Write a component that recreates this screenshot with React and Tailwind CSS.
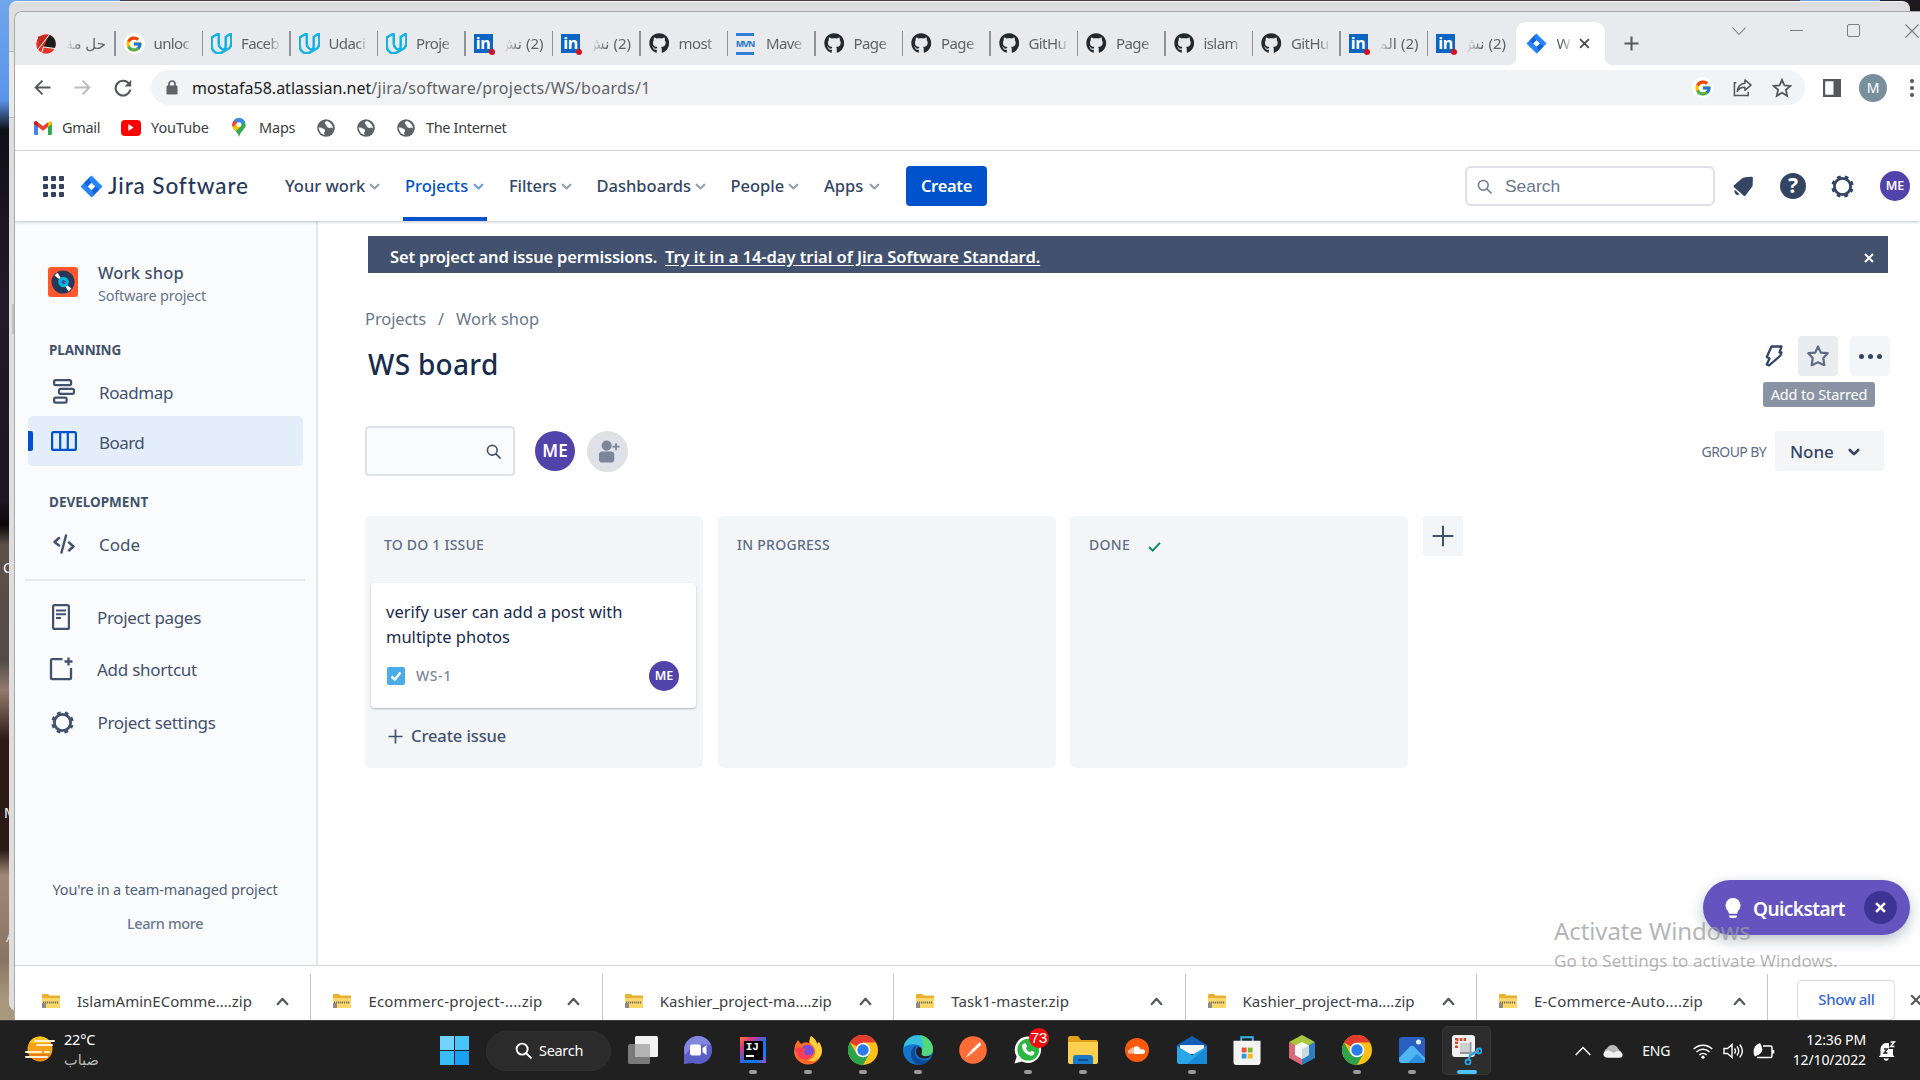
import React from "react";
import { FaGithub } from "react-icons/fa";
import { FcGoogle } from "react-icons/fc";
import { SiUdacity } from "react-icons/si";

/* ---------- shared icons ---------- */

const JiraMark = ({ className }) => (
  <svg viewBox="0 0 24 24" className={className}>
    <path d="M12 0.5 23.5 12 12 23.5 0.5 12Z" fill="#2684ff" />
    <path d="M12 0.5 Q8 5 12 8.2 L8.2 12 L4 8.5Z" fill="#1262d8" />
    <path d="M12 23.5 Q16 19 12 15.8 L15.8 12 L20 15.5Z" fill="#1262d8" />
    <path d="M12 8.2 15.8 12 12 15.8 8.2 12Z" fill="#fff" />
  </svg>
);

const Search = ({ className, sw = 2 }) => (
  <svg viewBox="0 0 16 16" className={className} fill="none" stroke="currentColor" strokeWidth={sw} strokeLinecap="round">
    <circle cx="6.7" cy="6.7" r="5.2" />
    <path d="M10.6 10.6 15 15" />
  </svg>
);

const Chevron = ({ className, up, sw = 2.4 }) => (
  <svg viewBox="0 0 12 12" className={className} fill="none" stroke="currentColor" strokeWidth={sw} strokeLinecap="round" strokeLinejoin="round">
    <path d={up ? "M1.5 8.5 6 3.5 10.5 8.5" : "M1.8 4 6 8.2 10.2 4"} />
  </svg>
);

const Cross = ({ className, sw = 2 }) => (
  <svg viewBox="0 0 12 12" className={className} stroke="currentColor" strokeWidth={sw}>
    <path d="M1.2 1.2 10.8 10.8M10.8 1.2 1.2 10.8" />
  </svg>
);

const Plus = ({ className, sw = 2 }) => (
  <svg viewBox="0 0 16 16" className={className} stroke="currentColor" strokeWidth={sw}>
    <path d="M8 0.5V15.5M0.5 8H15.5" />
  </svg>
);

const Gear = ({ className }) => (
  <svg viewBox="0 0 24 24" className={className} fill="none" stroke="currentColor">
    <circle cx="12" cy="12" r="7.8" strokeWidth="2.7" />
    <circle cx="12" cy="12" r="9.4" strokeWidth="2.8" strokeDasharray="3.6 3.783" strokeDashoffset="1.8" transform="rotate(22.5 12 12)" />
  </svg>
);

const LinkedIn = () => (
  <div className="relative flex size-[19px] items-center justify-center bg-[#0a66c2] font-['Open_Sans'] text-[16px] leading-none font-bold tracking-[-0.5px] text-white">
    <span className="mt-[-1px]">in</span>
    <span className="absolute right-[-2px] bottom-[-2px] size-[6px] rounded-full bg-[#d11124]" />
  </div>
);

const Maven = () => (
  <div className="flex h-[22px] w-[18px] flex-col items-center justify-between">
    <span className="h-[3px] w-full bg-[#2f7fd6]" />
    <span className="font-['Liberation_Sans'] text-[9.5px] leading-none font-bold tracking-[-1px] text-[#1a73d0]">MVN</span>
    <span className="h-[3px] w-full bg-[#2f7fd6]" />
  </div>
);

const GoogleDot = () => (
  <div className="flex size-[21px] items-center justify-center rounded-full bg-white">
    <FcGoogle className="size-[18px]" />
  </div>
);

const RedBlack = () => (
  <svg viewBox="0 0 20 20" className="size-[20px]">
    <circle cx="10" cy="10" r="9.8" fill="#e5352b" />
    <path d="M13 .6A9.800 9.800 0 0 1 18.500 14.500L7.500 13.500Z" fill="#1c1c1c" />
    <path d="M2 2.500 13 .6 3 16Z" fill="#c8281f" />
    <path d="M1.500 16 13.500 .5M5.500 19.500 7.500 13 19 14.500" fill="none" stroke="#fff" strokeWidth="1" />
  </svg>
);

const Avatar = ({ className }) => (
  <div className={"flex shrink-0 items-center justify-center rounded-full bg-[#5243aa] font-semibold text-white " + className}>ME</div>
);

/* ---------- browser chrome ---------- */

const gh = <FaGithub className="size-[20.5px] text-[#24292f]" />;
const ud = <SiUdacity className="size-[21px] fill-[#12b2e2] stroke-[#12b2e2] stroke-[1.2]" />;
const li = <LinkedIn />;

const tabs = [
  [<RedBlack />, "حل مة", true],
  [<GoogleDot />, "unloc"],
  [ud, "Faceb"],
  [ud, "Udaci"],
  [ud, "Proje"],
  [li, "(2) نش", true],
  [li, "(2) نش", true],
  [gh, "most"],
  [<Maven />, "Mave"],
  [gh, "Page"],
  [gh, "Page"],
  [gh, "GitHu"],
  [gh, "Page"],
  [gh, "islam"],
  [gh, "GitHu"],
  [li, "(2) الم", true],
  [li, "(2) نش", true],
];

function Tab({ icon, label, rtl, last }) {
  return (
    <div className="flex h-[43px] w-[87.5px] shrink-0 items-center">
      <div className="flex w-[38px] shrink-0 pl-[8px]">{icon}</div>
      <div
        dir={rtl ? "rtl" : "ltr"}
        className={
          "w-[40px] text-[15px] tracking-[-0.6px] whitespace-nowrap text-[#5f6368] " +
          (rtl
            ? "[mask-image:linear-gradient(to_left,black_60%,transparent)]"
            : "[mask-image:linear-gradient(to_right,black_68%,transparent)]")
        }
      >
        {label}
      </div>
      {!last && <div className="ml-auto h-[25px] w-[1.5px] bg-[#8f9398]" />}
    </div>
  );
}

function TabStrip() {
  return (
    <div className="flex h-[53px] shrink-0 items-end bg-[#e8eaed] pl-[13px]">
      {tabs.map(([icon, label, rtl], i) => (
        <Tab key={i} icon={icon} label={label} rtl={rtl} last={i === tabs.length - 1} />
      ))}
      <div className="relative flex h-[43px] w-[89px] shrink-0 items-center rounded-t-[10px] bg-white pl-[10px]">
        <span className="absolute bottom-0 left-[-8px] size-[8px] bg-[radial-gradient(circle_at_0_0,#e8eaed_8px,white_8.5px)]" />
        <span className="absolute right-[-8px] bottom-0 size-[8px] bg-[radial-gradient(circle_at_100%_0,#e8eaed_8px,white_8.5px)]" />
        <JiraMark className="size-[21px]" />
        <span className="ml-[10px] w-[15px] text-[15px] text-[#5f6368] [mask-image:linear-gradient(to_right,black_40%,transparent)]">W</span>
        <Cross className="ml-[7px] size-[11px] text-[#4a4d51]" />
      </div>
      <div className="flex h-[43px] items-center pl-[19px] text-[#54575b]">
        <Plus className="size-[15px]" sw={2.2} />
      </div>
      <div className="ml-auto flex h-[53px] w-[195px] shrink-0 items-start pt-[11px] text-[#7a7d81]">
        <svg viewBox="0 0 16 16" className="ml-[6px] size-[16px]" fill="none" stroke="currentColor" strokeWidth="1.1"><path d="M1.5 4.5 8 11.5 14.5 4.5" /></svg>
        <div className="mt-[7px] ml-[43px] h-px w-[13px] bg-current" />
        <div className="mt-[1px] ml-[44px] h-[13px] w-[13px] rounded-[2px] border border-current" />
        <svg viewBox="0 0 14 14" className="mt-[1px] ml-[45px] size-[14px] shrink-0" stroke="currentColor" strokeWidth="1.1"><path d="M.5.5 13.5 13.5M13.5.5.5 13.5" /></svg>
      </div>
    </div>
  );
}

function Toolbar() {
  return (
    <div className="flex h-[45px] shrink-0 items-center bg-white text-[#54575b]">
      <svg viewBox="0 0 18 18" className="ml-[19px] size-[17px]" fill="none" stroke="currentColor" strokeWidth="2"><path d="M17.5 9H2M9 1.7 1.7 9 9 16.3" /></svg>
      <svg viewBox="0 0 18 18" className="ml-[23px] size-[17px] text-[#b9bbbe]" fill="none" stroke="currentColor" strokeWidth="2"><path d="M.5 9H16M9 1.7 16.3 9 9 16.3" /></svg>
      <svg viewBox="0 0 18 18" className="ml-[23px] size-[18px]" fill="none" stroke="currentColor" strokeWidth="2.1"><path d="M15.2 5A7.4 7.4 0 1 0 16.3 10.6" /><path d="M17.2.8V7.4H10.6Z" fill="currentColor" stroke="none" /></svg>
      <div className="ml-[19px] flex h-[35px] w-[1654px] shrink-0 items-center rounded-full bg-[#f1f3f4]">
        <svg viewBox="0 0 12 15" className="ml-[15px] h-[15px] w-[12px]"><path d="M3 6.5V4a3 3 0 0 1 6 0V6.5" fill="none" stroke="#5f6368" strokeWidth="1.7" /><rect x=".5" y="5.6" width="11" height="9" rx="1.4" fill="#5f6368" /></svg>
        <div className="ml-[14px] text-[16px] whitespace-nowrap text-[#5f6368]">
          <span className="text-[#202124]">mostafa58.atlassian.net</span>
          <span className="tracking-[0.27px]">/jira/software/projects/WS/boards/1</span>
        </div>
        <div className="mr-[13px] ml-auto flex items-center">
          <GoogleDot />
          <svg viewBox="0 0 20 20" className="ml-[20px] size-[19px]" fill="none" stroke="currentColor" strokeWidth="1.6"><path d="M3.5 5H1.5V18.5H16V14.5" /><path d="M12.5 2 19 7.5 12.5 13V9.8Q7 9.500 4.500 14Q5 6.500 12.500 5.400Z" strokeLinejoin="round" /></svg>
          <svg viewBox="0 0 20 20" className="ml-[20px] size-[20px]" fill="none" stroke="currentColor" strokeWidth="1.8"><path d="M10 1.8 12.4 7.3 18.4 7.9 13.9 11.9 15.2 17.8 10 14.7 4.8 17.8 6.1 11.9 1.6 7.9 7.6 7.3Z" /></svg>
        </div>
      </div>
      <svg viewBox="0 0 18 18" className="ml-[18px] size-[18px]"><path d="M0 0H18V18H0ZM2.2 2.2V15.8H10.5V2.2Z" fillRule="evenodd" fill="currentColor" /></svg>
      <div className="ml-[18px] flex size-[28px] items-center justify-center rounded-full bg-[#78909c] text-[14px] text-white">M</div>
      <div className="ml-[23px] flex flex-col gap-[3px]">
        {[0, 1, 2].map((i) => <span key={i} className="size-[4px] rounded-full bg-current" />)}
      </div>
    </div>
  );
}

const Globe = ({ className }) => (
  <svg viewBox="0 0 18 18" className={"size-[18px] " + className}>
    <circle cx="9" cy="9" r="8.8" fill="#5f6368" />
    <path d="M1.6 8.6Q4.5 8 5.5 9.5Q8 9.5 8 12Q6.5 13.5 7.5 16Q2.5 15 1.6 8.6ZM10 2Q7.200 3 8 5Q10 5.500 9.500 7.500Q11.500 9.800 14.500 8.500L16 9.500Q15.500 4 10 2Z" fill="#fff" />
  </svg>
);

function Bookmarks() {
  return (
    <div className="flex h-[41px] shrink-0 items-center border-b border-[#dadce0] bg-white pb-[5px] text-[14.5px] text-[#3c4043]">
      <svg viewBox="0 0 18 14" className="ml-[19px] h-[14px] w-[18px]">
        <path d="M0 2V12.5Q0 14 1.5 14H4V5Z" fill="#4285f4" />
        <path d="M14 5V14H16.500Q18 14 18 12.500V2Z" fill="#34a853" />
        <path d="M14 1.500V6L18 3V2Q18 .2 16.300.2Z" fill="#fbbc04" />
        <path d="M0 2V3L9 9.800 14 6V1.200L9 5 2.500.3Q0-.3 0 2Z" fill="#ea4335" />
        <path d="M0 2V3L4 6V1.400L2.500.3Q0-.3 0 2Z" fill="#c5221f" />
      </svg>
      <span className="ml-[10px] w-[39px] tracking-[-0.3px]">Gmail</span>
      <div className="ml-[20px] flex h-[16px] w-[20px] items-center justify-center rounded-[4px] bg-[#f00]">
        <svg viewBox="0 0 6 8" className="h-[7px] w-[6px]"><path d="M0 0 6 4 0 8Z" fill="#fff" /></svg>
      </div>
      <span className="ml-[10px] w-[59px] tracking-[-0.1px]">YouTube</span>
      <svg viewBox="0 0 14 20" className="ml-[22px] h-[19px] w-[14px]">
        <path d="M7 0A7 7 0 0 0 0 7C0 12 5.500 13.500 7 20C8.500 13.500 14 12 14 7A7 7 0 0 0 7 0Z" fill="#34a853" />
        <path d="M7 0A7 7 0 0 1 13.200 3.800L7 7 1.600 2.500A7 7 0 0 1 7 0Z" fill="#4285f4" />
        <path d="M1.600 2.500A7 7 0 0 0 .6 9.800L5 5.300Z" fill="#ea4335" />
        <path d="M.6 9.800 5 5 9.500 8.500 3.500 14Q1.500 12 .6 9.800Z" fill="#fbbc04" />
        <circle cx="7" cy="7" r="2.600" fill="#fff" />
      </svg>
      <span className="ml-[13px] w-[37px] tracking-[-0.2px]">Maps</span>
      <Globe className="ml-[21px]" />
      <Globe className="ml-[22px]" />
      <Globe className="ml-[22px]" />
      <span className="ml-[11px] tracking-[-0.35px]">The Internet</span>
    </div>
  );
}

/* ---------- Jira header ---------- */

const nav = [
  ["Your work", "ml-[35px] w-[84px]"],
  ["Projects", "ml-[25px] w-[68px]", true],
  ["Filters", "ml-[25px] w-[51.5px] tracking-[-0.1px]"],
  ["Dashboards", "ml-[25px] w-[98px]"],
  ["People", "ml-[25px] w-[57.5px]"],
  ["Apps", "ml-[25px] w-[45px]"],
];

function JiraHeader() {
  return (
    <div className="z-10 flex h-[70px] shrink-0 items-center bg-white text-[16.5px] font-medium text-[#344563] shadow-[0_1px_3px_rgba(9,30,66,0.25)]">
      <div className="ml-[28px] grid grid-cols-3 gap-[3px]">
        {Array.from({ length: 9 }, (_, i) => <span key={i} className="size-[5px] rounded-[1px] bg-[#344563]" />)}
      </div>
      <JiraMark className="ml-[16px] size-[23px]" />
      <span className="ml-[5px] w-[142px] font-['Lato'] text-[22.5px] tracking-[0.9px] whitespace-nowrap text-[#253858]">Jira Software</span>
      {nav.map(([label, cls, active]) => (
        <div key={label} className={"relative flex h-full shrink-0 items-center " + (active ? "text-[#0052cc]" : "")}>
          <span className={"pt-[1px] whitespace-nowrap " + cls}>{label}</span>
          <Chevron className={"size-[11px] " + (active ? "text-[#6f9fe0]" : "text-[#97a0af]")} />
          {active && <span className="absolute right-[-3px] bottom-0 left-[23px] h-[4px] bg-[#0052cc]" />}
        </div>
      ))}
      <div className="ml-[26px] flex h-[40px] w-[81px] items-center justify-center rounded-[4px] bg-[#0052cc] pt-[1px] font-semibold tracking-[-0.3px] text-white">Create</div>
      <div className="ml-[478px] flex h-[40px] w-[250px] shrink-0 items-center rounded-[6px] border-2 border-[#dfe1e6] pl-[10px] font-['Liberation_Sans'] font-normal text-[#6b778c]">
        <Search className="size-[15px]" sw={1.6} />
        <span className="ml-[13px] text-[17.4px]">Search</span>
      </div>
      <svg viewBox="0 0 24 24" className="ml-[17px] size-[22px] shrink-0 text-[#344563]" fill="currentColor">
        <path d="M21.500 2Q22.800 2 22.800 3.300L22.500 12 14.500 22.500Q13.500 23.300 12.500 22.300L2 13Q1 12 2.200 11.200L10.500 4Q14 1.800 21.500 2Z" />
        <path d="M3 16.200 8.300 21Q6 22.800 4 21Q1.800 18.800 3 16.200Z" />
      </svg>
      <div className="ml-[26px] flex size-[26px] shrink-0 items-center justify-center rounded-full bg-[#344563] text-[21px] font-bold text-white">?</div>
      <Gear className="ml-[24px] size-[25px] shrink-0 text-[#344563]" />
      <Avatar className="ml-[25px] size-[30px] text-[12.5px]" />
    </div>
  );
}

/* ---------- sidebar ---------- */

function SideItem({ icon, label, className, text }) {
  return (
    <div className={"flex items-center " + className}>
      <div className="flex w-[46px] shrink-0 items-center">{icon}</div>
      <span className={"text-[17px] whitespace-nowrap " + text}>{label}</span>
    </div>
  );
}

function Sidebar() {
  return (
    <div className="flex w-[303px] shrink-0 flex-col border-r-2 border-[#e6e8ec] bg-[#fafbfc] text-[#42526e]">
      <div className="mt-[37px] ml-[33px] flex h-[50px]">
        <svg viewBox="0 0 30 30" className="mt-[9px] size-[30px]">
          <rect width="30" height="30" rx="3" fill="#ff5630" />
          <circle cx="15" cy="15" r="11.500" fill="#253858" />
          <path d="M15 15 6.500 8.500 9.500 5.500ZM15 15 23.500 21.500 20.500 24.500Z" fill="#fff" />
          <circle cx="15.500" cy="15" r="5.300" fill="#00b8d9" />
          <circle cx="15.500" cy="15" r="2" fill="#5243aa" />
        </svg>
        <div className="ml-[20px] flex flex-col">
          <span className="h-[27px] text-[16.5px] leading-[30px] font-medium tracking-[0.15px]">Work shop</span>
          <span className="text-[14.5px] leading-[20px] tracking-[-0.23px] text-[#6b778c]">Software project</span>
        </div>
      </div>
      <div className="mt-[32px] ml-[34px] h-[20px] text-[13.5px] leading-[20px] font-bold tracking-[-0.15px]">PLANNING</div>
      <SideItem
        className="mt-[6px] ml-[38px] h-[50px]"
        label="Roadmap"
        text="pt-[3px] tracking-[-0.39px]"
        icon={
          <svg viewBox="0 0 22 25" className="h-[25px] w-[22px]" fill="none" stroke="currentColor" strokeWidth="2.200">
            <rect x="1.100" y="1.100" width="17" height="5" rx="1.500" /><rect x="6" y="9.800" width="15" height="5" rx="1.500" /><rect x="1.100" y="18.600" width="12.500" height="5" rx="1.500" />
          </svg>
        }
      />
      <div className="ml-[13px] flex h-[50px] w-[275px] items-center rounded-[5px] bg-[#e4eefb]">
        <span className="h-[20px] w-[5px] rounded-r-[2px] bg-[#0052cc]" />
        <SideItem
          className="ml-[18px]"
          label="Board"
          text="ml-[2px] tracking-[-0.55px] pt-[3px]"
          icon={
            <svg viewBox="0 0 26 20" className="h-[20px] w-[26px]" fill="none" stroke="#0052cc" strokeWidth="2.200">
              <rect x="1.100" y="1.100" width="23.800" height="17.800" rx="1.500" /><path d="M9.200 1V19M16.800 1V19" />
            </svg>
          }
        />
      </div>
      <div className="mt-[26px] ml-[34px] h-[20px] text-[13.5px] leading-[20px] font-bold">DEVELOPMENT</div>
      <SideItem
        className="mt-[7px] ml-[38px] h-[50px]"
        label="Code"
        text="pt-[2px]"
        icon={
          <svg viewBox="0 0 22 20" className="h-[20px] w-[22px]" fill="none" stroke="currentColor" strokeWidth="2.400" strokeLinecap="round" strokeLinejoin="round">
            <path d="M6 4 1.500 8 6 11.500M16 8.500 20.500 12.500 16 16.500M13 1.500 8.500 18.500" />
          </svg>
        }
      />
      <div className="mt-[10px] ml-[10px] h-[2px] w-[280px] bg-[#e6e8ec]" />
      <SideItem
        className="mt-[14px] ml-[37px] h-[44px]"
        label="Project pages"
        text="ml-[-1px] pt-[2px] tracking-[-0.32px]"
        icon={
          <svg viewBox="0 0 18 26" className="h-[26px] w-[18px]" fill="none" stroke="currentColor" strokeWidth="2.200">
            <rect x="1.100" y="1.100" width="15.800" height="23.800" rx="1.500" /><path d="M4 6.500H14M4 10.200H14M4 14H9" strokeWidth="1.900" />
          </svg>
        }
      />
      <SideItem
        className="mt-[8px] ml-[34px] h-[44px]"
        label="Add shortcut"
        text="ml-[2px] pt-[1px] tracking-[-0.26px]"
        icon={
          <svg viewBox="0 0 24 24" className="size-[24px]" fill="none" stroke="currentColor" strokeWidth="2.300">
            <path d="M13.500 2.200H3.200Q2 2.200 2 3.400V21Q2 22.200 3.200 22.200H20.800Q22 22.200 22 21V11" /><path d="M19.500 .5V8.500M15.500 4.500H23.500" />
          </svg>
        }
      />
      <SideItem
        className="mt-[9px] ml-[35px] h-[44px]"
        label="Project settings"
        text="ml-[1.5px] pt-[1px] tracking-[-0.34px]"
        icon={<Gear className="size-[25px]" />}
      />
      <div className="mt-[134px] mr-[1px] text-center text-[14.5px] leading-[22px] tracking-[-0.15px] text-[#505f79]">You're in a team-managed project</div>
      <div className="mt-[12px] mr-[1px] text-center text-[14.5px] leading-[22px] font-medium tracking-[-0.4px] text-[#6b778c]">Learn more</div>
    </div>
  );
}

/* ---------- board ---------- */

function Column({ title, titleClass, done, children }) {
  return (
    <div className="flex h-[252px] w-[338px] shrink-0 flex-col rounded-[6px] bg-[#f4f5f7]">
      <div className="flex h-[57px] items-center pl-[19px] text-[14px] font-medium text-[#5e6c84]">
        <span className={titleClass}>{title}</span>
        {done && <svg viewBox="0 0 14 11" className="mt-[4px] ml-[18px] h-[10px] w-[13px]" fill="none" stroke="#00875a" strokeWidth="2"><path d="M1 5.500 5 9.500 13 1" /></svg>}
      </div>
      {children}
    </div>
  );
}

function Board() {
  return (
    <div className="flex flex-1 flex-col bg-white pt-[15px] pl-[47px] text-[#42526e]">
      <div className="ml-[3px] flex h-[37px] w-[1520px] items-center border-b border-[#4a4f66] bg-[#42526e] pt-[7px] pl-[22px] text-[16.5px] font-semibold whitespace-nowrap text-white">
        <span className="w-[275px] tracking-[-0.17px]">Set project and issue permissions.</span>
        <span className="tracking-[-0.05px] underline underline-offset-2">Try it in a 14-day trial of Jira Software Standard.</span>
        <Cross className="mr-[14px] ml-auto size-[10px]" sw={2.4} />
      </div>
      <div className="mt-[34px] flex h-[24px] items-center text-[16.5px] text-[#6b778c]">
        <span className="w-[73px] tracking-[-0.1px]">Projects</span>
        <span className="w-[18px]">/</span>
        <span>Work shop</span>
      </div>
      <div className="mt-[5px] flex h-[40px]">
        <span className="ml-[3px] pt-[8px] text-[28px] leading-[40px] font-medium tracking-[0.3px] text-[#172b4d]">WS board</span>
        <div className="relative mr-[30px] ml-auto flex h-[40px] items-center">
          <svg viewBox="0 0 18 22" className="mr-[15px] h-[22px] w-[18px]" fill="none" stroke="#344563" strokeWidth="2.300" strokeLinejoin="round">
            <path d="M6.500 1.500H16.500L14.500 7.500H16.500L15.500 10.500 4 20.500 1.800 19.500 4.500 13.500 1.800 12Z" />
          </svg>
          <div className="flex size-[40px] items-center justify-center rounded-[4px] bg-[#ebecf0]">
            <svg viewBox="0 0 24 24" className="size-[24px]" fill="none" stroke="#5e6c84" strokeWidth="2.200" strokeLinejoin="round"><path d="M12 2.500 14.800 8.600 21.700 9.200 17.300 14 18.300 21.200 12 18.300 5.700 21.200 6.700 14 2.300 9.200 9.200 8.600Z" /></svg>
          </div>
          <div className="ml-[12px] flex size-[40px] items-center justify-center gap-[4px] rounded-[4px] bg-[#f4f5f7]">
            {[0, 1, 2].map((i) => <span key={i} className="size-[5px] rounded-full bg-[#344563]" />)}
          </div>
          <div className="absolute top-[46px] right-[15px] flex h-[25px] w-[112px] items-center justify-center rounded-[3px] bg-[#8993a4] pt-[1px] text-[14.5px] tracking-[-0.15px] whitespace-nowrap text-white">Add to Starred</div>
        </div>
      </div>
      <div className="mt-[50px] flex h-[50px] items-center">
        <div className="flex h-[50px] w-[150px] items-center justify-end rounded-[4px] border-2 border-[#dfe1e6] bg-[#fafbfc] pr-[12px]">
          <Search className="size-[15px]" sw={1.7} />
        </div>
        <Avatar className="ml-[20px] size-[40px] text-[17px]" />
        <div className="ml-[12px] flex size-[41px] items-center justify-center rounded-full bg-[#dfe1e6]">
          <svg viewBox="0 0 24 24" className="ml-[3px] size-[23px]" fill="#7a869a">
            <circle cx="9" cy="5.800" r="5.300" /><path d="M1 15.500Q1 12 4.500 12H13.500Q17 12 17 15.500V20Q17 23.500 13.500 23.500H4.500Q1 23.500 1 20Z" />
            <path d="M18.800 3.300V10.700M15 7H22.600" stroke="#7a869a" strokeWidth="1.900" />
          </svg>
        </div>
        <span className="ml-auto text-[14px] tracking-[-0.6px] text-[#5e6c84]">GROUP BY</span>
        <div className="mr-[36px] ml-[9px] flex h-[40px] w-[109px] items-center rounded-[4px] bg-[#f4f5f7] pt-[1px] pl-[15px] text-[17px] font-medium tracking-[-0.1px] text-[#344563]">
          None
          <Chevron className="ml-[14px] size-[12px]" sw={2.6} />
        </div>
      </div>
      <div className="mt-[40px] flex">
        <Column title="TO DO 1 ISSUE" titleClass="tracking-[0.22px]">
          <div className="mt-[10px] ml-[6px] flex h-[125px] w-[325px] flex-col rounded-[4px] bg-white pt-[16px] pl-[15px] shadow-[0_1px_2px_rgba(9,30,66,0.3)]">
            <p className="w-[260px] text-[16.5px] leading-[25px] text-[#172b4d]">verify user can add a post with multipte photos</p>
            <div className="mt-[12px] flex h-[30px] items-center">
              <div className="ml-px flex size-[18px] items-center justify-center rounded-[2px] bg-[#4bade8]">
                <svg viewBox="0 0 12 12" className="size-[12px]" fill="none" stroke="#fff" strokeWidth="2.400"><path d="M1.500 6.500 4.800 9.500 10.500 2.500" /></svg>
              </div>
              <span className="ml-[11px] pb-[2px] text-[14px] font-medium tracking-[0.6px] text-[#7a869a]">WS-1</span>
              <Avatar className="mr-[17px] ml-auto size-[30px] text-[12.5px]" />
            </div>
          </div>
          <div className="mt-[14px] ml-[23px] flex h-[29px] items-center text-[16.5px] font-medium">
            <Plus className="size-[15px]" sw={1.8} />
            <span className="ml-[8px] tracking-[-0.1px]">Create issue</span>
          </div>
        </Column>
        <div className="ml-[15px]"><Column title="IN PROGRESS" titleClass="tracking-[0.27px]" /></div>
        <div className="ml-[14px]"><Column title="DONE" titleClass="tracking-[0.28px]" done /></div>
        <div className="ml-[15px] flex size-[40px] items-center justify-center rounded-[4px] bg-[#f4f5f7]">
          <Plus className="size-[22px]" sw={1.5} />
        </div>
      </div>
    </div>
  );
}

/* ---------- downloads ---------- */

const ZipIcon = () => (
  <svg viewBox="0 0 18 14" className="h-[14px] w-[18px] shrink-0">
    <path d="M0 1Q0 0 1 0H6L7.500 1.600H17Q18 1.600 18 2.600V13Q18 14 17 14H1Q0 14 0 13Z" fill="#e8b02e" />
    <path d="M0 4H18V13Q18 14 17 14H1Q0 14 0 13Z" fill="#fbd868" />
    <path d="M1 8.500H17" stroke="#6d6d6d" strokeWidth="1.800" strokeDasharray="1.200 .8" />
    <rect x="0" y="9" width="4" height="5" fill="#8d8d86" />
  </svg>
);

const files = [
  ["IslamAminEComme....zip", ""],
  ["Ecommerc-project-....zip", "tracking-[0.2px]"],
  ["Kashier_project-ma....zip", ""],
  ["Task1-master.zip", "tracking-[0.15px]"],
  ["Kashier_project-ma....zip", ""],
  ["E-Commerce-Auto....zip", "tracking-[0.22px]"],
];

function Downloads() {
  return (
    <div className="flex h-[55px] shrink-0 items-end border-t border-[#d5d7da] bg-white pl-[5px] text-[15px] text-[#3c4043]">
      {files.map(([name, cls], i) => (
        <div key={i} className="flex h-[46px] w-[291.4px] shrink-0 items-center border-r border-[#c4c7cb] pt-[8px] pl-[22px]">
          <ZipIcon />
          <span className={"ml-[17px] w-[195px] whitespace-nowrap " + cls}>{name}</span>
          <Chevron up className="ml-[4px] size-[13px] text-[#54575b]" sw={2} />
        </div>
      ))}
      <div className="ml-[29px] flex h-[40px] w-[98px] shrink-0 items-center justify-center rounded-[4px] border border-[#dadce0] pb-[1px] font-medium tracking-[-0.4px] text-[#3367d6]">Show all</div>
      <Cross className="mb-[14px] ml-[15px] size-[12px] shrink-0 text-[#54575b]" sw={2.2} />
    </div>
  );
}

/* ---------- taskbar ---------- */

const Chrome = () => (
  <svg viewBox="0 0 30 30" className="size-[30px]">
    <circle cx="15" cy="15" r="15" fill="#fbc116" />
    <path d="M15 15 2 7.500A15 15 0 0 1 28 7.500H15Z" fill="#e33b2e" />
    <path d="M2 7.500A15 15 0 0 0 15 30L21.500 18.700 8.500 18.700Z" fill="#2ca24c" />
    <circle cx="15" cy="15" r="7.300" fill="#fff" />
    <circle cx="15" cy="15" r="5.700" fill="#2a7de8" />
  </svg>
);

const apps = [
  [<svg viewBox="0 0 30 28" className="h-[28px] w-[30px]"><rect x="0" y="8" width="22" height="20" rx="1.500" fill="#7a7a7a" /><rect x="7" y="0" width="23" height="21" rx="1.500" fill="#f2f2f2" /><rect x="7" y="8" width="15" height="13" fill="#b4b4b4" /></svg>],
  [<svg viewBox="0 0 28 28" className="size-[28px]"><path d="M14 0A14 14 0 1 1 9 27L0 28V14A14 14 0 0 1 14 0Z" fill="#5b5fc7" /><path d="M14 0A14 14 0 0 1 27 9Q10 6 1 19A14 14 0 0 1 14 0Z" fill="#8287de" /><rect x="6" y="8.500" width="11" height="11" rx="2" fill="#fff" /><path d="M18.500 12 22.500 9V19L18.500 16Z" fill="#fff" /></svg>],
  [<div className="flex size-[26px] items-center justify-center bg-[linear-gradient(135deg,#fc6d3a_5%,#d8348c_25%,#1f6dea_55%,#087cfa_80%,#c23fb8)]"><div className="h-[19px] w-[19px] bg-black pl-[2px] font-['Liberation_Mono'] text-[11px] leading-[12px] font-bold text-white">IJ<div className="mt-[2px] h-[2px] w-[8px] bg-white" /></div></div>, true],
  [<svg viewBox="0 0 30 30" className="size-[30px]"><path d="M2 10 5 5 8 9Q12 6 16 8L18 1Q23 4 24 9L26 7Q30 13 28.500 19A14 14 0 0 1 1 17Z" fill="#ff6a2b" /><path d="M18 1Q15 6 18 9Q23 13 22 19Q20 25 14 25Q24 29 28.500 19Q30 13 26 7L24 9Q23 4 18 1Z" fill="#ffcf3a" /><circle cx="14.500" cy="16" r="6.300" fill="#7a4bd8" /><path d="M2 14Q7 11 13 14Q9 17 13 20Q17 21 19 18Q18 25 12 25Q5 25 2 14Z" fill="#ff3e55" /></svg>, true],
  [<Chrome />, true],
  [<svg viewBox="0 0 30 30" className="size-[30px]"><circle cx="15" cy="15" r="15" fill="#1576c9" /><path d="M1 10A15 15 0 0 1 30 14Q30 21 22 21Q18 21 18.500 18Q21 12 15 10Q7 8 1 12Z" fill="#35bfe0" /><path d="M17 .2A15 15 0 0 1 30 14Q30 21 22 21Q18 21 18.500 18Q22 8 17 .2Z" fill="#55d77c" /><path d="M8 21Q7 13 14 10Q8 22 19 25Q24 26 27 24Q22 30 15 30Q9 27 8 21Z" fill="#0b4a9b" /><path d="M18.700 18Q20 13 15.500 11.500Q12 14 13.500 19Q16 24 23 23.500Q27 23 28.500 20Q25 22 21 21Q18 20.500 18.700 18Z" fill="#202020" /></svg>, true],
  [<svg viewBox="0 0 28 28" className="size-[28px]"><circle cx="14" cy="14" r="13.800" fill="#ff6c37" /><path d="M21 6 12 14.500 14 16.500 22 9Z" fill="#fff" /><path d="M12 14.500 6 22 14 17Z" fill="#fde3d8" /></svg>],
  [<div className="relative"><svg viewBox="0 0 28 28" className="size-[28px]"><path d="M14.500 .5A13.200 13.200 0 1 1 8 25.500L.5 27.500 2.700 20.500A13.200 13.200 0 0 1 14.500 .5Z" fill="#fff" /><circle cx="14.300" cy="13.700" r="10.900" fill="#2cb742" /><path d="M9.500 7.500 12 7.500 13 10.500 11.800 12.200Q13.200 15 16 16.200L17.500 14.800 20.500 16.300Q20 20 16.500 19.800Q9 17.500 8 10.500Q8 8.500 9.500 7.500Z" fill="#fff" /></svg><span className="absolute -top-[8px] left-[15px] flex size-[20px] items-center justify-center rounded-full bg-[#f40b0b] font-['Liberation_Sans'] text-[15.5px] tracking-[-0.5px] text-white">73</span></div>, true],
  [<svg viewBox="0 0 30 28" className="h-[28px] w-[30px]"><path d="M0 2Q0 0 2 0H10L13 4H28Q30 4 30 6V14H0Z" fill="#e3a11b" /><path d="M0 6H30V26Q30 28 28 28H2Q0 28 0 26Z" fill="#fdd04f" /><path d="M5 28V22Q5 19 8 19H22Q25 19 25 22V28Z" fill="#1879c9" /><path d="M10 24H20" stroke="#0d4f93" strokeWidth="2" /></svg>, true],
  [<svg viewBox="0 0 24 24" className="size-[24px]"><circle cx="12" cy="12" r="12" fill="#ff5a0a" /><path d="M4 15.500V12M6 15.500V10.500M8 15.500V9.500" stroke="#fff" strokeWidth="1.200" /><path d="M9 16V9Q14 6.500 15.500 11.500Q20 10.500 20 13.800Q20 16 17.500 16Z" fill="#fff" /></svg>],
  [<svg viewBox="0 0 30 28" className="h-[28px] w-[30px]"><path d="M15 0 30 9V12H0V9Z" fill="#1160b5" /><path d="M3 9H27V18H3Z" fill="#f4f6f8" /><path d="M0 10 15 19 30 10V26Q30 28 28 28H2Q0 28 0 26Z" fill="#29a6e8" /><path d="M30 11V28H10Z" fill="#1a8ad6" /></svg>, true],
  [<svg viewBox="0 0 28 30" className="h-[29px] w-[28px]"><path d="M8 6V1.200H20V6" fill="none" stroke="#35b4ea" strokeWidth="2" /><path d="M0 5H28V27Q28 30 25 30H3Q0 30 0 27Z" fill="#f3f3f3" /><rect x="8.500" y="12" width="5" height="5" fill="#e8503a" /><rect x="14.800" y="12" width="5" height="5" fill="#7bb72f" /><rect x="8.500" y="18.300" width="5" height="5" fill="#2a9de0" /><rect x="14.800" y="18.300" width="5" height="5" fill="#f6b81a" /></svg>],
  [<svg viewBox="0 0 26 30" className="h-[30px] w-[26px]"><path d="M13 0 26 7 13 15 0 7Z" fill="#a5c73a" /><path d="M0 7 13 14V30L0 23Z" fill="#d96a7b" /><path d="M26 7 13 14V30L26 23Z" fill="#2e7fbf" /><path d="M13 7 20 10.500V20L13 24 6 20V10.500Z" fill="#f3f6f8" /><path d="M13 14 20 10.500V20L13 24Z" fill="#cdd8de" /></svg>],
  [<Chrome />, true],
  [<svg viewBox="0 0 26 26" className="size-[26px]"><rect width="26" height="26" rx="3" fill="#2a5fc0" /><path d="M0 21 11 9.500Q13 8 15 9.500L26 21V23Q26 26 23 26H3Q0 26 0 23Z" fill="#4fb4f2" /><path d="M9 26 18 17 26 24Q25 26 23 26Z" fill="#2b90e4" /><circle cx="19.500" cy="5" r="2.500" fill="#e6f2ff" /></svg>, true],
  [<svg viewBox="0 0 30 30" className="size-[30px]"><rect x="0" y="0" width="23" height="22" rx="3" fill="#f1f1f1" /><path d="M4.500 13V4.500H15.500" fill="none" stroke="#d6482e" strokeWidth="3" strokeDasharray="2.600 1.300" /><rect x="8" y="8" width="9" height="9" fill="#cfcfcf" /><path d="M18.500 7V19L16.500 25M8 18H20L27 16" fill="none" stroke="#8e989e" strokeWidth="2" /><circle cx="16" cy="27" r="2.500" fill="none" stroke="#2aa5e8" strokeWidth="1.800" /><circle cx="27" cy="16" r="2.500" fill="none" stroke="#2aa5e8" strokeWidth="1.800" /><path d="M16.500 25 18 20.500 25 17" fill="none" stroke="#2aa5e8" strokeWidth="2" /></svg>, "active"],
];

function Taskbar() {
  return (
    <div className="flex h-[60px] shrink-0 items-center border-t border-[#3c3c3c] bg-[#202020] text-white">
      <svg viewBox="0 0 30 26" className="mb-[4px] ml-[25px] h-[26px] w-[30px]">
        <circle cx="15" cy="13" r="12.500" fill="#f7a11b" />
        <path d="M4 7A12.500 12.500 0 0 1 26 7Z" fill="#fbc21e" />
        <path d="M4 18A12.500 12.500 0 0 0 26 18Z" fill="#ea7c12" />
        <path d="M10 5H29M12 9H27M1 16H16M20 16H24M1 21H22" stroke="#fff0cf" strokeWidth="2" strokeLinecap="round" />
      </svg>
      <div className="mb-[3px] ml-[9px] flex w-[376px] flex-col text-[14.5px] leading-[20px]">
        <span className="tracking-[-0.2px]">22°C</span>
        <span className="text-[#b8b8b8]">ضباب</span>
      </div>
      <div className="grid size-[29px] grid-cols-2 gap-[1px]">
        <span className="bg-[#6fd3fb]" /><span className="bg-[#48c4f8]" /><span className="bg-[#3cbcf6]" /><span className="bg-[#1ba1f2]" />
      </div>
      <div className="ml-[17px] flex h-[40px] w-[125px] shrink-0 items-center rounded-full border border-[#303030] bg-[#2b2b2b] pl-[28px]">
        <Search className="size-[17px]" sw={1.8} />
        <span className="ml-[7px] text-[14.5px] tracking-[-0.3px]">Search</span>
      </div>
      <div className="ml-[5px] flex">
        {apps.map(([icon, dot], i) => (
          <div key={i} className="relative flex h-[59px] w-[54.9px] shrink-0 items-center justify-center pb-[1px]">
            {dot === "active" && <span className="absolute inset-x-[3px] inset-y-[5px] rounded-[5px] border border-[#363636] bg-[#2d2d2d]" />}
            <span className="relative">{icon}</span>
            {dot && <span className={"absolute bottom-[6px] h-[4px] rounded-full " + (dot === "active" ? "w-[20px] bg-[#4cc2ff]" : "w-[8px] bg-[#9a9a9a]")} />}
          </div>
        ))}
      </div>
      <svg viewBox="0 0 16 10" className="ml-[81px] h-[10px] w-[16px] shrink-0" fill="none" stroke="#fff" strokeWidth="1.400"><path d="M.7 9 8 1.500 15.300 9" /></svg>
      <svg viewBox="0 0 20 14" className="ml-[12px] h-[14px] w-[20px] shrink-0"><path d="M5 13A4.500 4.500 0 0 1 4 4.500A6 6 0 0 1 15 4.500L18 8 10 13Z" fill="#b9b9b9" /><path d="M5 13.800Q0 13.500 .5 9.500Q2 6 6 6.500L11 9Q16 5 19 9Q21 13 16.500 13.800Z" fill="#f2f2f2" /></svg>
      <span className="ml-[19px] w-[29px] text-[14px] tracking-[-0.2px]">ENG</span>
      <svg viewBox="0 0 20 16" className="ml-[22px] h-[16px] w-[20px] shrink-0" fill="none" stroke="#fff" strokeWidth="1.600"><path d="M.8 6A13 13 0 0 1 19.200 6M3.500 9A9.200 9.200 0 0 1 16.500 9M6.400 12A5.200 5.200 0 0 1 13.600 12" /><circle cx="10" cy="14.200" r="1.600" fill="#fff" stroke="none" /></svg>
      <svg viewBox="0 0 21 16" className="ml-[10px] h-[16px] w-[21px] shrink-0" fill="none" stroke="#fff" strokeWidth="1.400"><path d="M1 5.500H4.500L9 1.500V14.500L4.500 10.500H1ZM11.500 5.500Q13.500 8 11.500 10.500M14 3.500Q17.500 8 14 12.500M16.800 1.500Q22 8 16.800 14.500" /></svg>
      <svg viewBox="0 0 22 18" className="ml-[9px] h-[18px] w-[22px] shrink-0" fill="none" stroke="#fff" strokeWidth="1.500"><path d="M10 4H17.500Q19 4 19 5.500V14Q19 15.500 17.500 15.500H4M20.500 8V11.500" /><path d="M1 13Q-1 4 7 1Q12 9 6 12.500L2 14.500Z" fill="#fff" stroke="none" /></svg>
      <div className="mb-[2px] ml-auto flex w-[80px] shrink-0 flex-col text-right text-[14px] leading-[20px] tracking-[-0.12px]">
        <span>12:36 PM</span>
        <span>12/10/2022</span>
      </div>
      <svg viewBox="0 0 18 20" className="mr-[24px] ml-[12px] h-[20px] w-[18px] shrink-0"><path d="M2.500 14V8A6 6 0 0 1 8 2H11V8H15V14L16.500 16H.8Z" fill="#fff" /><path d="M5.500 17.500H11Q10 19.800 8.200 19.800T5.500 17.500Z" fill="#fff" /><path d="M6 8H9.500L6 12H9.500" fill="none" stroke="#202020" strokeWidth="1.300" /><path d="M12.500 1H16.500L12.500 5.500H16.500" fill="none" stroke="#fff" strokeWidth="1.400" /></svg>
    </div>
  );
}

/* ---------- page ---------- */

export default function App() {
  return (
    <div className="relative flex h-[1080px] w-[1920px] flex-col overflow-hidden font-['Noto_Sans','DejaVu_Sans',sans-serif]">
      <div className="relative h-[1020px] shrink-0 overflow-hidden bg-[linear-gradient(to_bottom,#6fa5ea_0,#5b95ea_100px,#101018_130px,#221a2a_300px,#1c1620_500px,#0a0808_525px,#5d5048_545px,#544a48_660px,#937a6c_690px,#2e1a16_740px,#2c1a14_850px,#a08878_875px,#8a7462_960px,#a8987c_1000px)]">
        <div className="absolute inset-x-[120px] top-0 h-[2px] bg-[#4a3c42]" />
        <div className="absolute top-0 right-0 h-[12px] w-[40px] bg-[#1c1a20]" />
        <span className="absolute top-[558px] left-[3px] text-[14px] leading-[20px] text-white">C</span>
        <span className="absolute top-[803px] left-[4px] text-[14px] leading-[20px] text-white">M</span>
        <span className="absolute top-[927px] left-[6px] text-[14px] leading-[20px] text-[#ddd]">A</span>
        <div className="absolute top-[1px] left-[9px] h-[1010px] w-[1901px] rounded-[8px] border-t border-[#f4f4f4] bg-[#dedede]">
          <div className="mt-[49px] h-[67px] w-[8px] border-y border-[#b8b8b8] bg-[#e9e9e9]" />
          <div className="mt-[186px] ml-[3px] h-[30px] w-[5px] bg-[#c1c1c1]" />
        </div>
        <div className="absolute top-[11px] left-[14px] flex h-[1009px] w-[1906px] flex-col overflow-hidden rounded-tl-[8px] border-t border-l border-[#a9a9a9] bg-white">
          <TabStrip />
          <Toolbar />
          <Bookmarks />
          <JiraHeader />
          <div className="flex min-h-0 flex-1">
            <Sidebar />
            <Board />
          </div>
          <Downloads />
        </div>
        <div className="absolute top-[880px] left-[1703px] flex h-[55px] w-[207px] items-center rounded-full bg-[#6554c0] pl-[22px] text-white shadow-[0_5px_14px_rgba(9,30,66,0.28)]">
          <svg viewBox="0 0 16 20" className="h-[20px] w-[16px]" fill="#fff"><path d="M8 0A7.500 7.500 0 0 1 13 13L12 15.800H4L3 13A7.500 7.500 0 0 1 8 0ZM4 17.500H12V18Q12 20 10 20H6Q4 20 4 18Z" /></svg>
          <span className="ml-[12px] w-[93px] pt-[3px] text-[19px] font-semibold tracking-[-0.53px]">Quickstart</span>
          <div className="ml-[18px] flex size-[33px] items-center justify-center rounded-full bg-[#403294]">
            <Cross className="size-[11px]" sw={3} />
          </div>
        </div>
        <div className="absolute top-[913px] left-[1554px] flex flex-col whitespace-nowrap text-[#9c9c9c]/75">
          <span className="h-[36px] text-[24px] leading-[36px] tracking-[-0.1px]">Activate Windows</span>
          <span className="text-[17px] leading-[24px] tracking-[0.06px]">Go to Settings to activate Windows.</span>
        </div>
      </div>
      <Taskbar />
    </div>
  );
}
